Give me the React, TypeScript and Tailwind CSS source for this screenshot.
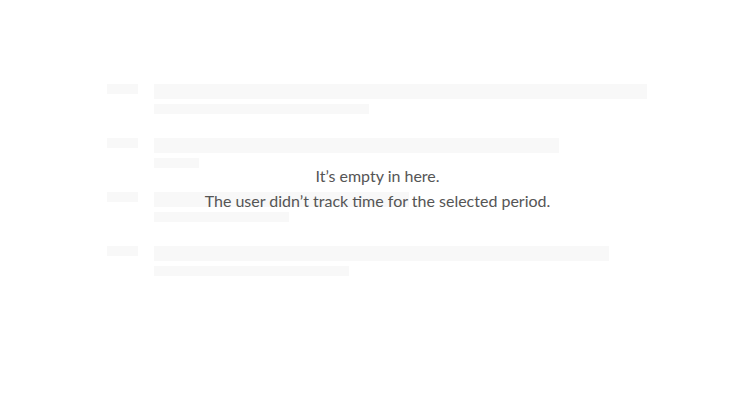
const rows = [
  { top: 'w-[493px]', bottom: 'w-[215px]' },
  { top: 'w-[405px]', bottom: 'w-[45px]' },
  { top: 'w-[255px]', bottom: 'w-[135px]' },
  { top: 'w-[455px]', bottom: 'w-[195px]' },
];

export default function App() {
  return (
    <div className="w-[755px] h-[412px] bg-white font-['Lato',sans-serif]">
      <div className="relative mx-auto w-[541px] pt-[84px]">
        {/* skeleton rows */}
        <div className="flex flex-col gap-6">
          {rows.map((row, idx) => (
            <div key={idx} className="flex gap-4">
              <div className="w-[31px] h-[10px] bg-[#f8f8f8]" />
              <div className="flex flex-col gap-[5px]">
                <div className={`${row.top} h-[15px] bg-[#f8f8f8]`} />
                <div className={`${row.bottom} h-[10px] bg-[#f8f8f8]`} />
              </div>
            </div>
          ))}
        </div>

        {/* empty state message */}
        <div className="absolute left-0 right-0 top-[163px] text-center text-[16px] leading-[25px] text-[#555]">
          <p>It’s empty in here.</p>
          <p>The user didn’t track time for the selected period.</p>
        </div>
      </div>
    </div>
  );
}
